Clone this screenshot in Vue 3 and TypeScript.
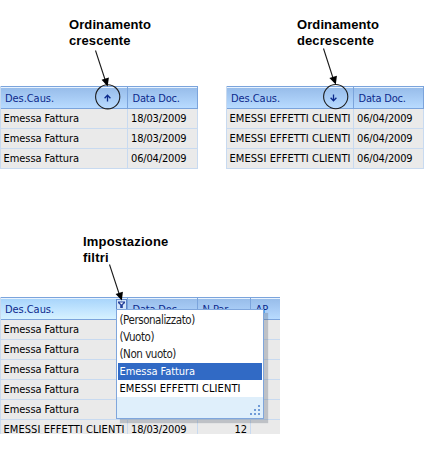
<script setup lang="ts">
interface SortExample {
  id: string
  title: [string, string]
  direction: 'up' | 'down'
  rows: [string, string][]
}

const sortExamples: SortExample[] = [
  {
    id: 'asc',
    title: ['Ordinamento', 'crescente'],
    direction: 'up',
    rows: [
      ['Emessa Fattura', '18/03/2009'],
      ['Emessa Fattura', '18/03/2009'],
      ['Emessa Fattura', '06/04/2009'],
    ],
  },
  {
    id: 'desc',
    title: ['Ordinamento', 'decrescente'],
    direction: 'down',
    rows: [
      ['EMESSI EFFETTI CLIENTI', '06/04/2009'],
      ['EMESSI EFFETTI CLIENTI', '06/04/2009'],
      ['EMESSI EFFETTI CLIENTI', '06/04/2009'],
    ],
  },
]

const filterRows: string[][] = [
  ['Emessa Fattura', '', '', ''],
  ['Emessa Fattura', '', '', ''],
  ['Emessa Fattura', '', '', ''],
  ['Emessa Fattura', '', '', ''],
  ['Emessa Fattura', '', '', ''],
  ['EMESSI EFFETTI CLIENTI', '18/03/2009', '12', ''],
]

const options: string[] = ['(Personalizzato)', '(Vuoto)', '(Non vuoto)', 'Emessa Fattura', 'EMESSI EFFETTI CLIENTI']
const selected = 'Emessa Fattura'

const isUpper = (text: string): boolean => text === text.toUpperCase() && /[A-Z]/.test(text)
const isDate = (text: string): boolean => text.includes('/')
</script>

<template>
  <main class="page">
    <section class="sorting">
      <article v-for="ex in sortExamples" :key="ex.id" class="example" :class="ex.id">
        <h2 class="title">{{ ex.title[0] }}<br />{{ ex.title[1] }}</h2>
        <div class="grid">
          <div class="row head">
            <div class="cell">
              <span>Des.Caus.</span>
              <svg class="sort" :class="ex.direction" width="7" height="8" viewBox="0 0 7 8">
                <path d="M3.5 7.6V1.2M0.6 4.3L3.5 1.3L6.4 4.3" fill="none" stroke="#0c2a8c" stroke-width="1.3" />
              </svg>
            </div>
            <div class="cell"><span class="doc">Data Doc.</span></div>
          </div>
          <div v-for="(row, r) in ex.rows" :key="r" class="row">
            <div v-for="(text, c) in row" :key="c" class="cell">
              <span :class="{ upper: isUpper(text), date: isDate(text) }">{{ text }}</span>
            </div>
          </div>
        </div>
      </article>
    </section>

    <section class="filtering">
      <h2 class="title">Impostazione<br />filtri</h2>
      <div class="grid wide">
        <div class="row head">
          <div class="cell hot">
            <span>Des.Caus.</span>
            <svg class="funnel" width="11" height="11" viewBox="0 0 11 11">
              <rect x="0.5" y="0.5" width="10" height="10" fill="#d3e6fb" stroke="#5d86c9" />
              <path d="M2 2.5H9V4L6.8 6V9H4.2V6L2 4Z" fill="#24419b" />
              <path d="M3.6 3.6H7.4L5.5 5.6Z" fill="#fff" />
            </svg>
          </div>
          <div class="cell"><span class="doc">Data Doc.</span></div>
          <div class="cell"><span>N.Par.</span></div>
          <div class="cell"><span>AP</span></div>
        </div>
        <div v-for="(row, r) in filterRows" :key="r" class="row">
          <div v-for="(text, c) in row" :key="c" class="cell">
            <span :class="{ upper: isUpper(text), date: isDate(text) }">{{ text }}</span>
          </div>
        </div>
        <div class="menu">
          <div
            v-for="opt in options"
            :key="opt"
            class="option"
            :class="{ selected: opt === selected, special: opt.startsWith('(') }"
          >
            <span :class="{ upper: isUpper(opt) }">{{ opt }}</span>
          </div>
          <div class="grip">
            <svg width="11" height="11" viewBox="0 0 11 11" fill="#6f9bd8">
              <path d="M8 0h2v2h-2zM4 4h2v2h-2zM8 4h2v2h-2zM0 8h2v2h-2zM4 8h2v2h-2zM8 8h2v2h-2z" />
            </svg>
          </div>
        </div>
      </div>
    </section>

    <svg class="callouts" width="426" height="451" viewBox="0 0 426 451">
      <g fill="none" stroke="#1c1c1c" stroke-width="1.1">
        <path d="M95.5 50.5L105.2 80M323.5 48.5L333 78M109.5 264.5L119.2 294" />
        <circle cx="107.7" cy="96.8" r="12.1" />
        <circle cx="335.7" cy="96.6" r="12.1" />
      </g>
      <g fill="#000">
        <path d="M107.6 86.5L101.6 79.7L108.9 77.6Z" />
        <path d="M335.8 84.5L329.4 78L336.9 75.8Z" />
        <path d="M121.8 300.5L115.6 293.9L122.9 291.8Z" />
      </g>
    </svg>
  </main>
</template>

<style>
body {
  background: #fff;
}
</style>

<style scoped>
.page {
  position: relative;
  width: 426px;
  height: 451px;
  overflow: hidden;
  box-sizing: border-box;
  padding-top: 17px;
  font-family: 'DejaVu Sans Condensed', 'DejaVu Sans', sans-serif;
  font-stretch: condensed;
  font-size: 11px;
  letter-spacing: -0.06px;
  color: #000;
}
.upper {
  letter-spacing: 0.07px;
}
.date {
  letter-spacing: -0.16px;
}
.doc {
  letter-spacing: -0.2px;
}
.sorting {
  display: flex;
  gap: 28px;
  height: 217px;
}
.example {
  width: 198px;
  flex: none;
}
.title {
  box-sizing: border-box;
  height: 69px;
  margin: 0;
  padding-left: 69px;
  font: bold 13px/16px 'Liberation Sans', Arial, sans-serif;
  letter-spacing: 0.1px;
}
.desc .title {
  padding-left: 71px;
}
.filtering .title {
  height: 63px;
  padding-left: 83px;
  letter-spacing: 0.2px;
}
.grid {
  box-sizing: border-box;
  width: 198px;
  border-left: 1px solid #c8daf0;
}
.row {
  display: grid;
  grid-template-columns: 127px 70px;
  height: 20px;
  background: #eaeaea;
}
.cell {
  display: flex;
  align-items: center;
  min-width: 0;
  box-sizing: border-box;
  padding-left: 2.5px;
  border-right: 1px solid #c8daf0;
  border-bottom: 1px solid #c8daf0;
  white-space: nowrap;
  line-height: 19px;
}
.cell + .cell {
  padding-left: 3px;
}
.head {
  height: 23px;
  color: #0c2a8c;
}
.head .cell {
  border-top: 1px solid #7ba4dc;
  border-bottom-color: #7ba4dc;
  border-right-color: #7ba4dc;
  padding-left: 4px;
  background: linear-gradient(#e8f3ff 0 1px, #98bdea 1px, #a5c9f3 45%, #b8dbff);
}
.head .cell span {
  padding-top: 1px;
}
.head .cell + .cell {
  padding-left: 4.5px;
}
.sort {
  margin-left: auto;
  margin-right: 16px;
}
.sort.down {
  transform: rotate(180deg);
}
.wide {
  position: relative;
  width: 280px;
  height: 137px;
  overflow: hidden;
}
.wide .row {
  grid-template-columns: 127px 70px 53px 29px;
}
.wide .cell:last-child {
  border-right: 0;
}
.wide .row:not(.head) .cell:nth-child(3) {
  justify-content: flex-end;
  padding-right: 3px;
}
.head .hot {
  background: linear-gradient(#e8f3ff 0 1px, #a9d5fb 1px, #c3e6ff 60%, #d6f2ff);
}
.funnel {
  align-self: flex-start;
  margin: 1px 0 0 auto;
}
.menu {
  position: absolute;
  left: 115px;
  top: 12px;
  width: 148px;
  height: 110px;
  box-sizing: border-box;
  padding: 2px 1px 0;
  border: 1px solid #7fa6dc;
  background: #fff;
  box-shadow: 4px 4px 1px rgba(90, 100, 115, 0.3);
}
.option {
  height: 17px;
  padding-left: 1.5px;
  line-height: 17px;
  white-space: nowrap;
}
.option.special {
  font-size: 11.5px;
  letter-spacing: -0.45px;
  color: #1c1c1c;
}
.option.selected {
  background: #316ac5;
  color: #fff;
}
.grip {
  display: flex;
  justify-content: flex-end;
  align-items: flex-end;
  box-sizing: border-box;
  height: 21px;
  margin: 0 -1px;
  padding: 0 2px 2px;
  background: #dfeffb;
}
.callouts {
  position: absolute;
  left: 0;
  top: 0;
  pointer-events: none;
}
</style>
